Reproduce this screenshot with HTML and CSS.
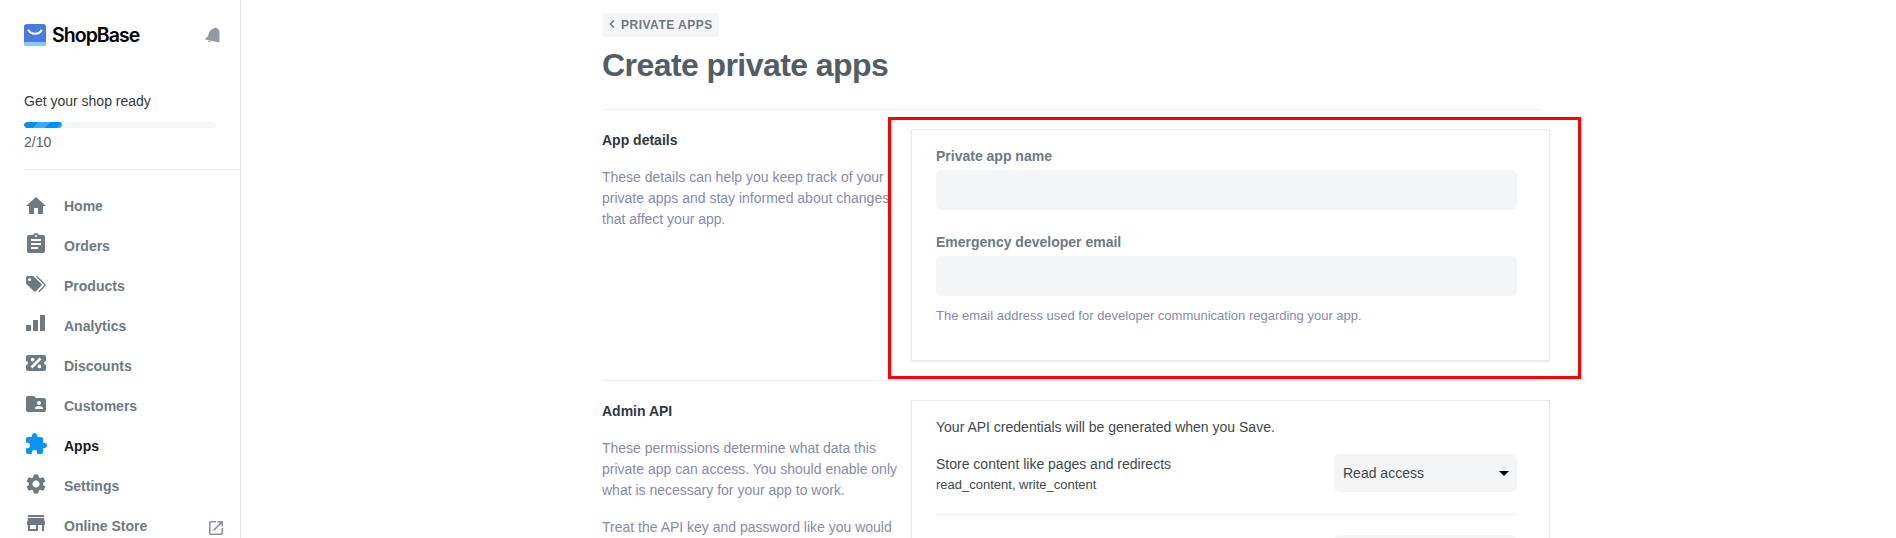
FILE: index.html
```html
<!DOCTYPE html>
<html lang="en">
<head>
<meta charset="utf-8">
<title>Create private apps</title>
<link rel="stylesheet" href="styles.css">
</head>
<body>
<div class="app">
  <aside class="sidebar">
    <div class="brand">
      <svg class="brand-mark" viewBox="0 0 22 22"><defs><clipPath id="mark"><rect width="22" height="22" rx="3"/></clipPath></defs><g clip-path="url(#mark)"><rect width="22" height="22" fill="#4a7ade"/><rect y="18" width="22" height="4" fill="#8cc8fa"/></g><path d="M4.200 5.800C7 11.200 15 11.200 17.800 5.800" fill="none" stroke="#fff" stroke-width="2"/></svg>
      <span class="brand-name">ShopBase</span>
      <svg class="bell" viewBox="0 0 16 18"><path d="M11.300.2l1.200 1.100c1.900.9 2.900 2.300 2.900 4.300V16.500L.2 13.200c-.2-.8.100-1.200.9-1.500 1.700-.7 2.200-1.800 2.800-4.200C4.700 4.300 6.500 2 10 1.300z"/><path d="M3.200 14.500l3.100.7c-.7 1.300-2.500 1.300-3.100-.7z"/></svg>
    </div>
    <section class="progress">
      <div class="progress-title">Get your shop ready</div>
      <div class="track"><div class="fill"></div></div>
      <div class="progress-count">2/10</div>
    </section>
    <nav class="nav">
      <a class="item home"><svg viewBox="0 0 24 24"><path d="M10 20v-6h4v6h5v-8h3L12 3 2 12h3v8z"/></svg><span>Home</span></a>
      <a class="item"><svg viewBox="0 0 24 24"><path d="M19 3h-4.180C14.400 1.840 13.300 1 12 1s-2.400.84-2.820 2H5c-1.100 0-2 .9-2 2v14c0 1.100.9 2 2 2h14c1.100 0 2-.9 2-2V5c0-1.100-.9-2-2-2zm-7 0c.55 0 1 .45 1 1s-.45 1-1 1-1-.45-1-1 .45-1 1-1zm2 14H7v-2h7v2zm3-4H7v-2h10v2zm0-4H7V7h10v2z"/></svg><span>Orders</span></a>
      <a class="item"><svg viewBox="0 0 24 24"><path fill-rule="evenodd" d="M2 5.500C2 4.700 2.700 4 3.500 4h5.300c.5 0 .9.200 1.200.5l7.200 7.200c.6.600.6 1.500 0 2.100l-5.200 5.500c-.6.600-1.500.600-2.100 0L2.500 12c-.3-.3-.5-.7-.5-1.100zM5.500 5.900a1.500 1.500 0 1 0 0 3 1.500 1.500 0 0 0 0-3z"/><path d="M12.500 4.300l8.300 8.200c.4.400.4.900 0 1.300l-6 6" class="line"/></svg><span>Products</span></a>
      <a class="item raised"><svg viewBox="0 0 24 24"><path d="M2 14h5v6H2zM9 9h5v11H9zM16 4h5v16h-5z"/></svg><span>Analytics</span></a>
      <a class="item raised"><svg viewBox="0 0 24 24"><path fill-rule="evenodd" d="M4 4a2 2 0 0 0-2 2v4a2 2 0 0 1 0 4v4a2 2 0 0 0 2 2h16a2 2 0 0 0 2-2v-4a2 2 0 0 1 0-4V6a2 2 0 0 0-2-2zM15.600 6.500L17.500 8.400 8.400 17.500 6.500 15.600zM8.600 6.700a1.900 1.900 0 1 1 0 3.800 1.900 1.900 0 0 1 0-3.800zM15.400 13.500a1.900 1.900 0 1 1 0 3.800 1.900 1.900 0 0 1 0-3.800z"/></svg><span>Discounts</span></a>
      <a class="item"><svg viewBox="0 0 24 24"><path d="M20 6h-8l-2-2H4c-1.100 0-2 .9-2 2v12c0 1.100.9 2 2 2h16c1.100 0 2-.9 2-2V8c0-1.100-.9-2-2-2zm-5 3c1.100 0 2 .9 2 2s-.9 2-2 2-2-.9-2-2 .9-2 2-2zm4 8h-8v-1c0-1.330 2.670-2 4-2s4 .67 4 2v1z"/></svg><span>Customers</span></a>
      <a class="item active"><svg viewBox="0 0 24 24"><path d="M20.500 11H19V7c0-1.100-.9-2-2-2h-4V3.500C13 2.120 11.880 1 10.500 1S8 2.120 8 3.500V5H4c-1.100 0-1.990.9-1.990 2v3.800H3.500c1.490 0 2.700 1.210 2.700 2.700s-1.210 2.700-2.700 2.700H2V20c0 1.100.9 2 2 2h3.800v-1.500c0-1.490 1.210-2.700 2.700-2.700 1.490 0 2.700 1.210 2.700 2.700V22H17c1.100 0 2-.9 2-2v-4h1.500c1.380 0 2.500-1.120 2.500-2.500S21.880 11 20.500 11z"/></svg><span>Apps</span></a>
      <a class="item"><svg viewBox="0 0 24 24"><path d="M19.140 12.940c.04-.3.060-.61.060-.94 0-.32-.02-.64-.07-.94l2.030-1.580c.18-.14.230-.41.120-.61l-1.920-3.320c-.12-.22-.37-.29-.59-.22l-2.390.96c-.5-.38-1.030-.7-1.620-.94l-.36-2.540c-.04-.24-.24-.41-.48-.41h-3.840c-.24 0-.43.170-.47.410l-.36 2.540c-.59.240-1.130.570-1.620.94l-2.390-.96c-.22-.08-.47 0-.59.220L2.740 8.870c-.12.210-.08.470.12.610l2.030 1.580c-.05.300-.09.630-.09.940s.02.640.07.940l-2.030 1.580c-.18.140-.23.410-.12.610l1.920 3.320c.12.220.37.290.59.220l2.390-.96c.5.380 1.030.7 1.620.94l.36 2.540c.05.240.24.410.48.410h3.840c.24 0 .44-.17.470-.41l.36-2.540c.59-.24 1.130-.56 1.620-.94l2.390.96c.22.080.47 0 .59-.22l1.920-3.320c.12-.22.070-.47-.12-.61l-2.010-1.580zM12 15.600c-1.980 0-3.600-1.620-3.600-3.600s1.620-3.600 3.600-3.600 3.600 1.620 3.600 3.600-1.620 3.600-3.600 3.600z"/></svg><span>Settings</span></a>
      <a class="item raised"><svg viewBox="0 0 24 24"><path d="M20 4H4v2h16V4zm1 10v-2l-1-5H4l-1 5v2h1v6h10v-6h4v6h2v-6h1zm-9 4H6v-4h6v4z"/></svg><span>Online Store</span>
        <svg class="external" viewBox="3 3 18 18"><path d="M19 19H5V5h7V3H5c-1.110 0-2 .9-2 2v14c0 1.100.89 2 2 2h14c1.100 0 2-.9 2-2v-7h-2v7zM14 3v2h3.590l-9.830 9.830 1.410 1.410L19 6.410V10h2V3h-7z"/></svg></a>
    </nav>
  </aside>
  <main class="page">
    <a class="back"><svg viewBox="0 0 6 8"><path d="M5 .5L1.300 4 5 7.500"/></svg><span>PRIVATE APPS</span></a>
    <h1>Create private apps</h1>
    <section class="group details">
      <div class="about">
        <h2>App details</h2>
        <p>These details can help you keep track of your<br>private apps and stay informed about changes<br>that affect your app.</p>
      </div>
      <div class="card">
        <label>Private app name</label>
        <div class="input"></div>
        <label>Emergency developer email</label>
        <div class="input"></div>
        <div class="hint">The email address used for developer communication regarding your app.</div>
      </div>
      <div class="highlight"></div>
    </section>
    <section class="group">
      <div class="about">
        <h2>Admin API</h2>
        <p>These permissions determine what data this<br>private app can access. You should enable only<br>what is necessary for your app to work.</p>
        <p>Treat the API key and password like you would</p>
      </div>
      <div class="card api">
        <div class="intro">Your API credentials will be generated when you Save.</div>
        <div class="scope">
          <div><div class="scope-title">Store content like pages and redirects</div><div class="scope-keys">read_content, write_content</div></div>
          <div class="select"><span>Read access</span><svg viewBox="0 0 10 5"><path d="M0 0h10L5 5z"/></svg></div>
        </div>
        <div class="scope next"><div></div><div class="select"></div></div>
      </div>
    </section>
  </main>
</div>
</body>
</html>
```
FILE: styles.css
```css
* { box-sizing: border-box; }
body { margin: 0; background: #fff; font-family: "Liberation Sans", Arial, sans-serif; font-size: 14px; color: #40484e; }
.app { display: flex; height: 538px; overflow: hidden; }

.sidebar { flex: none; width: 241px; padding: 24px 0 0 24px; border-right: 1px solid #e4e4ec; }
.brand { display: flex; height: 22px; }
.brand-mark { width: 22px; height: 22px; }
.brand-name { width: 88px; margin-left: 6px; font: 600 19.5px/23px Inter, sans-serif; letter-spacing: -0.95px; color: #000; }
.bell { width: 15px; height: 17px; margin: 3px 0 0 65px; fill: #919aa1; }
.progress { height: 124px; padding-top: 45px; border-bottom: 1px solid #efeff3; }
.progress-title { line-height: 20px; color: #33393e; }
.track { width: 192px; height: 6px; margin-top: 11px; border-radius: 3px; background: #f4f5f7; overflow: hidden; }
.fill { width: 38px; height: 6px; border-radius: 3px; background: linear-gradient(135deg, #0090f0 32%, #33adff 32% 60%, #0090f0 60% 88%, #33adff 88%); }
.progress-count { margin-top: 4px; line-height: 20px; color: #555e66; }
.nav { padding-top: 16px; }
.item { display: flex; height: 40px; align-items: center; font-weight: 700; color: #6d7a82; }
.item svg { flex: none; width: 24px; height: 24px; margin-top: -4px; fill: currentColor; }
.item.home svg { margin-top: 0; }
.item.raised svg { margin-top: -6px; }
.item span { margin-left: 16px; }
.item .line { fill: none; stroke: currentColor; stroke-width: 1.300; }
.item.active { color: #16191c; }
.item.active svg { fill: #0a93f2; }
.item.raised svg.external { width: 14px; height: 14px; margin: 4px 17px 0 auto; fill: #8d8faa; }

.page { width: 948px; margin-left: 361px; padding-top: 13px; }
.back { display: flex; align-items: center; width: 117px; height: 24px; padding-left: 7px; border-radius: 4px; background: #f4f5f7; font-weight: 700; font-size: 12px; letter-spacing: .5px; color: #6d7a82; }
.back svg { width: 6px; height: 8px; margin: -3px 6px 0 0; fill: none; stroke: currentColor; stroke-width: 1.500; }
h1 { margin: 8px 0 24px; font-size: 32px; line-height: 40px; letter-spacing: -.57px; color: #525d66; }
.group { position: relative; display: flex; height: 271px; padding-top: 20px; }
.group::before { content: ""; position: absolute; left: 0; top: 0; width: 940px; height: 1px; background: #f0f0f4; }
.about { flex: none; width: 309px; white-space: nowrap; }
h2 { margin: 1px 0 17px; font-size: 14px; line-height: 20px; color: #31383d; }
p { margin: 0 0 16px; line-height: 21px; color: #888ba5; }
.card { width: 639px; height: 232px; padding: 15px 24px; border: 1px solid #ebebed; box-shadow: 0 1px 2px rgba(0,0,0,.1); }
label { display: block; height: 25px; line-height: 22px; font-weight: 700; color: #6d7a82; }
.input { width: 581px; height: 40px; margin-bottom: 21px; border-radius: 6px; background: #f4f5f7; }
.hint { margin-top: -11px; font-size: 13px; line-height: 20px; color: #888ba5; }
.highlight { position: absolute; left: 286px; top: 8px; width: 693px; height: 262px; border: 3px solid #f00; }
.card.api { height: 300px; padding-top: 16px; }
.intro { line-height: 21px; }
.scope { display: flex; justify-content: space-between; width: 581px; height: 77px; padding-top: 16px; border-bottom: 1px solid #f0f0f4; }
.scope.next { padding-top: 20px; }
.scope-title { line-height: 20px; }
.scope-keys { padding-top: 1px; font-size: 13px; line-height: 20px; }
.select { display: flex; justify-content: space-between; align-items: center; width: 183px; height: 38px; padding: 0 8px 0 9px; border-radius: 6px; background: #f4f5f7; }
.select svg { width: 10px; height: 5px; fill: #000; }
```
